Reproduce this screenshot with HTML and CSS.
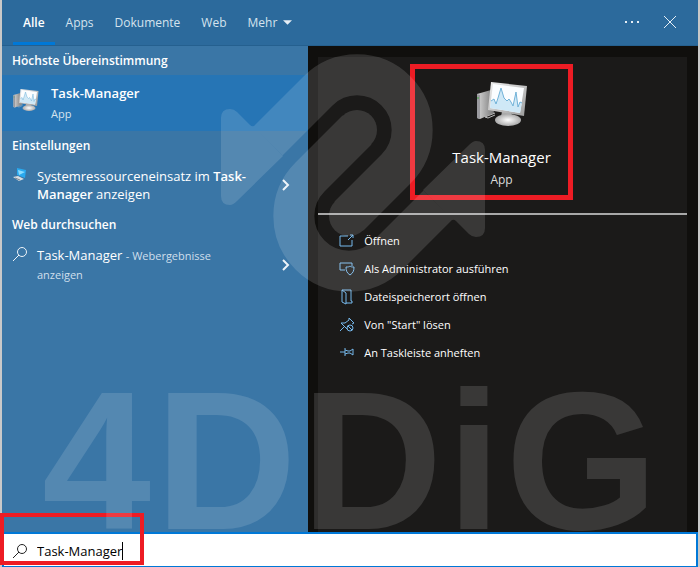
FILE: index.html
```html
<!DOCTYPE html>
<html lang="de">
<head>
    <meta charset="UTF-8">
    <title>Suche</title>
    <link rel="stylesheet" href="styles.css">
</head>
<body>
<svg class="defs" aria-hidden="true">
    <defs>
        <linearGradient id="case"><stop offset="0" stop-color="#d6d6d6"/><stop offset="1" stop-color="#777"/></linearGradient>
        <linearGradient id="frame" x1="0" y1="0" x2="1" y2="1"><stop offset="0" stop-color="#eee"/><stop offset="1" stop-color="#9b9b9b"/></linearGradient>
        <radialGradient id="foot"><stop offset="0" stop-color="#fff"/><stop offset="1" stop-color="#aaa"/></radialGradient>
        <symbol id="monitor" viewBox="0 0 52 46">
            <path d="M1 13 15 9 18 32 4 38 1 37Z" fill="url(#case)"/>
            <path d="M1 13 4 14 4 38 1 37Z" fill="#9a9a9f"/>
            <path d="M2 16v2" stroke="#3da83a"/>
            <path d="M9 36 19 32M9 36l3 1 7-3" stroke="#bbb" fill="none"/>
            <path d="M26 31h9l2 8H24Z" fill="#aaa"/>
            <ellipse cx="32" cy="39" rx="13" ry="6" fill="url(#foot)"/>
            <path d="M15 1 51 5 48 35 12 29Z" fill="url(#frame)"/>
            <path d="M17 3 48 7 44 32 14 27Z" fill="#fbfdff"/>
            <path d="M15 20 18 18 20 23 22 17 25 7 28 17 31 20 33 18 35 21 37 25 40 11 42 26 44 21 46 22 44 32 14 27Z" fill="#cfe8f6"/>
            <path d="M15 20 18 18 20 23 22 17 25 7 28 17 31 20 33 18 35 21 37 25 40 11 42 26 44 21 46 22" fill="none" stroke="#71b2d8"/>
        </symbol>
        <symbol id="lens" viewBox="0 0 16 16">
            <circle cx="10" cy="6" r="4.500"/><path d="M7 9 1 15"/>
        </symbol>
    </defs>
</svg>
<div class="search">
    <header class="tabs">
        <button class="tab active">Alle</button>
        <button class="tab">Apps</button>
        <button class="tab">Dokumente</button>
        <button class="tab">Web</button>
        <button class="tab">Mehr <svg class="arrow" viewBox="0 0 10 5"><path d="M0 0h10L5 5Z"/></svg></button>
        <button class="tool more" aria-label="Optionen"><svg viewBox="0 0 14 14"><path d="M0 6h2v2H0zM6 6h2v2H6zM12 6h2v2h-2z"/></svg></button>
        <button class="tool" aria-label="Schließen"><svg viewBox="0 0 14 14"><path d="M1 1 13 13M13 1 1 13"/></svg></button>
    </header>
    <main class="content">
        <section class="results">
            <h2>Höchste Übereinstimmung</h2>
            <a class="best" href="#">
                <svg class="best-icon"><use href="#monitor"/></svg>
                <span><b>Task-Manager</b><small>App</small></span>
            </a>
            <h2>Einstellungen</h2>
            <a class="item" href="#">
                <svg class="item-icon" viewBox="0 0 16 16">
                    <path d="M5 1 14 3 13 11 5 8Z" fill="#29a9ef"/>
                    <path d="M6 3 13 5 7 8Z" fill="#8bdcff"/>
                    <path d="M1 10 6 9 12 12 7 14Z" fill="#d8dde2"/>
                    <path d="M3 11 8 13" stroke="#78848d"/>
                </svg>
                <span class="item-text">Systemressourceneinsatz im <b>Task-<br>Manager</b> anzeigen</span>
                <svg class="next" viewBox="0 0 8 12"><path d="M1 1 6 6 1 11"/></svg>
            </a>
            <h2>Web durchsuchen</h2>
            <a class="item" href="#">
                <svg class="item-icon lens"><use href="#lens"/></svg>
                <span class="item-text">Task-Manager <small>- Webergebnisse<br>anzeigen</small></span>
                <svg class="next" viewBox="0 0 8 12"><path d="M1 1 6 6 1 11"/></svg>
            </a>
        </section>
        <section class="preview">
            <div class="hero">
                <div class="marked">
                    <svg class="hero-icon"><use href="#monitor"/></svg>
                    <h1>Task-Manager</h1>
                    <p>App</p>
                </div>
            </div>
            <div class="actions">
                <button class="action"><svg viewBox="0 0 16 16"><path d="M9 3H1v10h12V7M9 7l5-5M11 2h3v3"/></svg>Öffnen</button>
                <button class="action"><svg viewBox="0 0 16 16"><path d="M6 9H1V2h12v3M11 5c1 1 2 1 4 1 0 4-1 6-4 8-3-2-4-4-4-8 2 0 3 0 4-1Z"/></svg>Als Administrator ausführen</button>
                <button class="action"><svg viewBox="0 0 16 16"><path d="M3 13V1h9v11h1v2H7M3 1l4 3v11l-4-2"/></svg>Dateispeicherort öffnen</button>
                <button class="action"><svg viewBox="0 0 16 16"><path d="M1 14 5 10M2 6l6 6M2 6l4 0 4-3V1l5 5-2 1"/><circle cx="11" cy="11" r="3"/><path d="M9 9l4 4"/></svg>Von "Start" lösen</button>
                <button class="action"><svg viewBox="0 0 16 16"><path d="M1 7h5M6 3v8M6 5l3 1h2l3-2v6l-3-2H9L6 9"/></svg>An Taskleiste anheften</button>
            </div>
        </section>
    </main>
    <label class="query">
        <svg class="lens"><use href="#lens"/></svg>
        <input type="text" value="Task-Manager" size="10" aria-label="Suchbegriff"><i class="caret"></i>
    </label>
    <div class="query-mark"></div>
    <div class="brand" aria-hidden="true">
        <svg class="brand-logo" viewBox="220 54 267 239">
            <g id="hook">
                <path class="band" d="M268 141 318 91A55 55 0 1 1 396 169L349 216"/>
                <circle cx="349" cy="216" r="20"/>
                <path d="M221 118Q221 109 230 109 234 109 237 112L250 125Q252 127 254 126L283 156 237 201Q233 205 230 205 221 205 221 196Z"/>
            </g>
            <use href="#hook" transform="rotate(180 353 173)"/>
        </svg>
        <div class="brand-name"><span>4</span><span>D</span><span>D</span><span>i</span><span>G</span></div>
    </div>
</div>
</body>
</html>
```

FILE: styles.css
```css
*{
    margin: 0;
    padding: 0;
    box-sizing: border-box;
}
body{
    font: 12px/18px "Open Sans", "Noto Sans", sans-serif;
    color: #fff;
    background-color: #c9c9c9;
}
button,input{
    font: inherit;
    color: inherit;
    background: none;
    border: 0;
    outline: 0;
}
a{
    color: inherit;
    text-decoration: none;
}
b,h2{
    font-weight: 600;
}
svg{
    flex: none;
    fill: none;
}
.defs{
    position: absolute;
    width: 0;
    height: 0;
}
.search{
    position: relative;
    display: flex;
    flex-direction: column;
    min-height: 100vh;
    padding: 0 2px;
    overflow: hidden;
}
.tabs{
    display: flex;
    height: 46px;
    padding: 0 9px 0 11px;
    background-color: #2c6a9c;
    border-bottom: 1px solid #25608f;
}
.tab{
    padding: 3px 10px 0;
    margin-right: 1px;
    border-bottom: 3px solid transparent;
    color: #d5e3ee;
}
.active{
    color: #fff;
    font-weight: 600;
    border-color: #0078d7;
}
.arrow{
    width: 9px;
    height: 5px;
    margin-left: 3px;
    vertical-align: 2px;
    fill: #e6eef5;
}
.tool{
    width: 38px;
    padding-top: 3px;
}
.tool svg{
    width: 14px;
    height: 14px;
    stroke: #e6eef5;
}
.more{
    margin-left: auto;
}
.more svg{
    fill: #e6eef5;
    stroke: none;
}
.content{
    flex: 1;
    display: flex;
}
.results{
    width: 44%;
    background-color: #3a76a6;
}
.results h2{
    padding: 6px 10px 5px;
    font-size: 12px;
    line-height: 18px;
    white-space: nowrap;
}
.best{
    display: flex;
    gap: 12px;
    height: 56px;
    padding: 8px 11px;
    background-color: #2675b5;
}
.best-icon{
    width: 26px;
    height: 26px;
    margin-top: 4px;
}
.best b,.best small{
    display: block;
}
.best b{
    font-size: 13px;
    line-height: 20px;
}
.best small{
    font-size: 11px;
    line-height: 22px;
    color: #d5e3ee;
}
.item{
    display: flex;
    gap: 9px;
    padding: 7px 18px 7px 10px;
    font-size: 13px;
    line-height: 18px;
}
.item-icon{
    width: 16px;
    height: 16px;
}
.item-text{
    flex: 1;
    white-space: nowrap;
}
.item small{
    font-size: 11px;
    color: #cfdfec;
}
.lens{
    width: 16px;
    height: 16px;
    stroke: #eef4f9;
}
.next{
    align-self: center;
    width: 8px;
    height: 12px;
    stroke: #eef4f9;
    stroke-width: 2;
}
.preview{
    flex: 1;
    background-color: #1b1a19;
    border: solid #100f0d;
    border-width: 11px 11px 0 10px;
}
.hero{
    padding: 7px 0 13px;
    border-bottom: 2px solid #a8a8a8;
}
.marked{
    width: 44%;
    margin-left: 25%;
    padding: 12px 0 4px 20px;
    border: 5px solid #ed1c24;
    text-align: center;
}
.hero-icon{
    display: block;
    width: 52px;
    height: 46px;
    margin: 0 auto;
}
.marked h1{
    margin-top: 18px;
    font-size: 15px;
    line-height: 24px;
    font-weight: normal;
}
.marked p{
    line-height: 22px;
    color: #ddd;
}
.actions{
    padding: 12px 21px;
}
.action{
    display: flex;
    align-items: center;
    gap: 9px;
    width: 100%;
    padding: 5px 0;
    font-size: 11px;
    line-height: 18px;
    white-space: nowrap;
}
.action svg{
    width: 16px;
    height: 16px;
    stroke: #76b9ed;
}
.query{
    display: flex;
    align-items: center;
    gap: 9px;
    height: 35px;
    padding: 2px 8px 0;
    background-color: #fff;
    border: 2px solid #0078d7;
    border-bottom-width: 1px;
    color: #000;
    font-size: 13px;
}
.query .lens{
    stroke: #222;
}
.query input{
    field-sizing: content;
    line-height: 18px;
}
.caret{
    width: 1px;
    height: 18px;
    margin-left: -9px;
    background-color: #000;
}
/* red frame around the search box */
.query-mark{
    position: absolute;
    left: 0;
    bottom: 2px;
    width: 144px;
    height: 52px;
    border: 4px solid #ed1c24;
}
/* logo and name laid over the whole window */
.brand{
    position: absolute;
    inset: 0;
    display: flex;
    flex-direction: column;
    align-items: center;
    justify-content: space-between;
    padding: 54px 42px 36px;
    opacity: .13;
    pointer-events: none;
}
.brand-logo{
    width: 267px;
    height: 239px;
    margin-left: 7px;
    fill: #fff;
}
.band{
    fill: none;
    stroke: #fff;
    stroke-width: 41px;
}
.brand-name{
    display: flex;
    justify-content: space-between;
    width: 100%;
    font: bold 196px/138px "Liberation Sans", Arial, sans-serif;
}
```
